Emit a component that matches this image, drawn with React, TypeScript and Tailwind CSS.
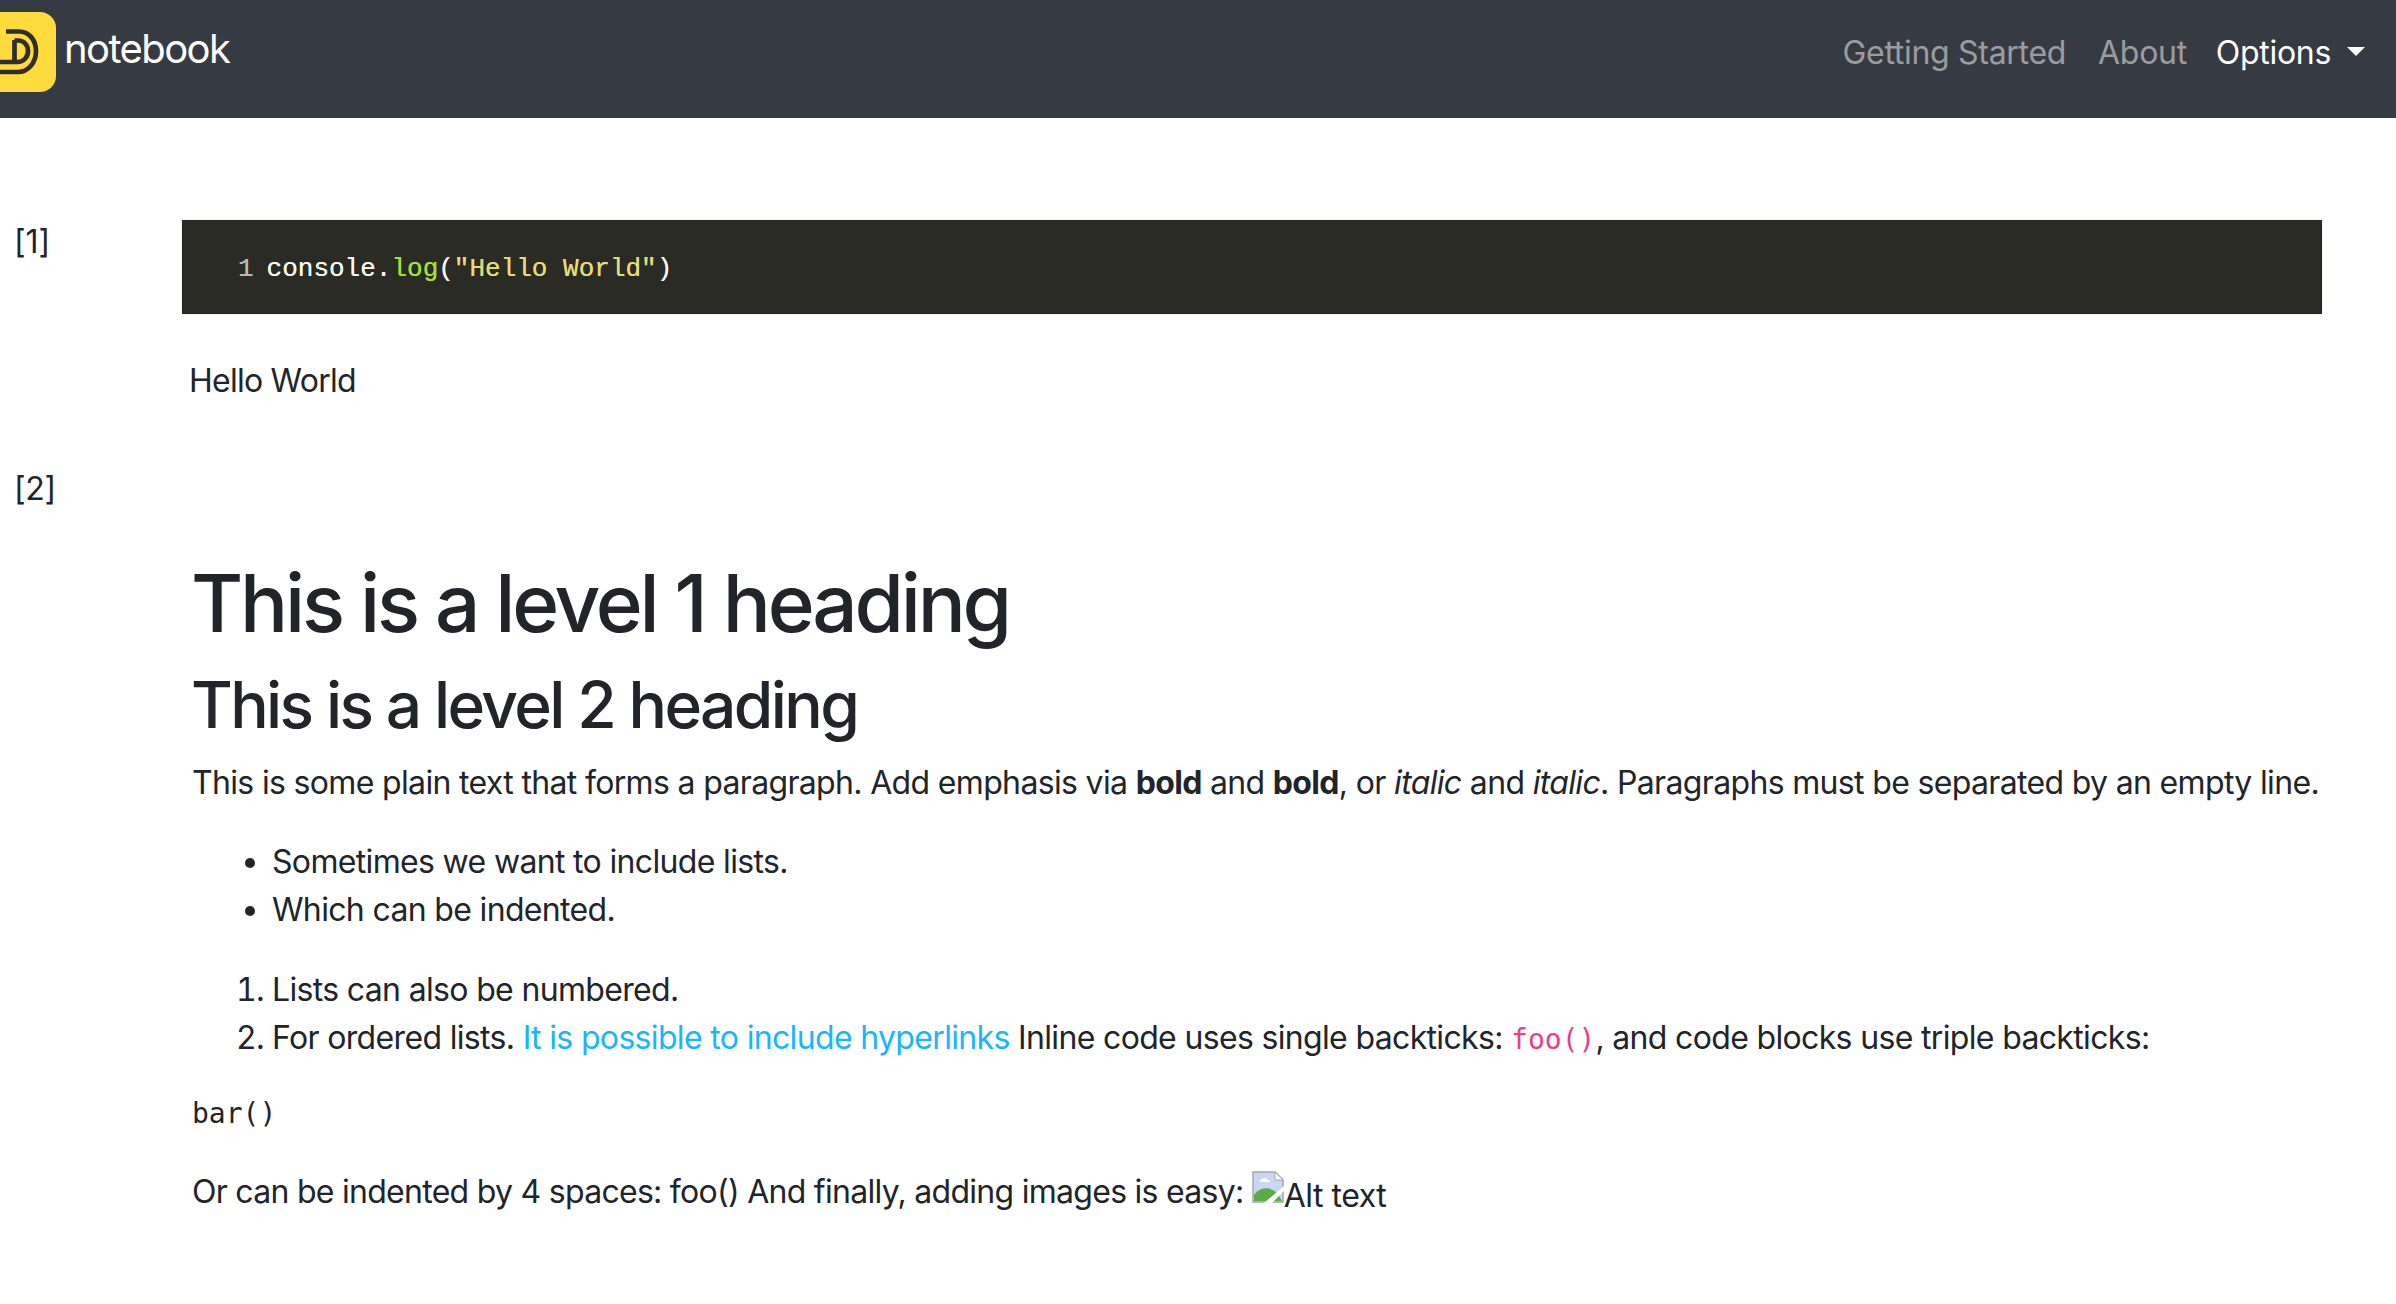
function Logo() {
  return (
    <div className="-ml-6 mb-[14px] h-20 w-20 shrink-0 rounded-2xl bg-[#ffdb3d]">
      <svg viewBox="0 0 80 80" className="h-20 w-20" fill="none" stroke="#2f2e2b" strokeWidth="4.700">
        <path d="M30 19.500H43C53 19.500 60 28 60 39C60 51 52 60 42 60H0" />
        <path d="M38.500 28.500H42C48 28.500 52 33 52 39C52 45 48 50 41 50H0M38.500 28V50" />
      </svg>
    </div>
  )
}

function BrokenImage() {
  return (
    <svg viewBox="0 0 32 32" className="inline-block h-8 w-8 align-baseline">
      <path d="M1 1h22l8 8v22H1z" fill="#c7d7f4" stroke="#a6a6a6" strokeWidth="1.500" />
      <path d="M23 1v8h8z" fill="#fff" stroke="#a6a6a6" strokeWidth="1" />
      <path d="M8 10c0-3 7-4 8-1 2 0 3 2 1 2H9c-1 0-1-1-1-1z" fill="#fff" />
      <path d="M2 30v-6c4-6 14-11 24-1l4 7z" fill="#5aac44" />
      <path d="M12 32 32 15v5L20 32z" fill="#fff" />
    </svg>
  )
}

export default function App() {
  return (
    <div className="min-h-[1304px] overflow-hidden bg-white font-['Inter',sans-serif] text-[32px] leading-[48px] tracking-[-0.66px] text-[#212529]">
      {/* Navbar */}
      <nav className="flex h-[118px] items-center justify-between bg-[#363a42] pr-[31px]">
        <div className="flex items-center gap-2">
          <Logo />
          <span className="pb-5 text-[40px] tracking-[-1.6px] text-white">notebook</span>
        </div>
        <div className="flex items-center gap-8 pb-3 tracking-[-0.3px]">
          <a className="text-white/50">Getting Started</a>
          <a className="text-white/50">About</a>
          <a className="-ml-[3px] flex items-center gap-4 text-white">
            Options
            <span className="mb-1 h-0 w-0 border-x-[9px] border-t-[9px] border-x-transparent border-t-white" />
          </a>
        </div>
      </nav>

      {/* Cell 1 */}
      <section className="mt-[102px] flex">
        <div className="-mt-0.5 w-[182px] shrink-0 pl-[14px] tracking-[-0.1px]">[1]</div>
        <div className="mr-[74px] flex-1">
          <pre className="flex h-[94px] items-center bg-[#2b2b25] pl-14 pt-[3px] font-['Liberation_Mono',monospace] text-[26px] tracking-normal text-[#f8f8f2] ring-1 ring-[#f3f3f3] [text-shadow:0_0_0.5px_currentColor]">
            <span className="mr-[13px] text-[#b9b9b4]">1</span>
            <span>console.</span>
            <span className="text-[#a6e22e]">log</span>
            <span>(</span>
            <span className="text-[#e6db74]">"Hello World"</span>
            <span>)</span>
          </pre>
          <p className="mt-[43px] pl-[7px] tracking-[-0.76px]">Hello World</p>
        </div>
      </section>

      {/* Cell 2 */}
      <section className="mt-[60px] flex">
        <div className="w-[192px] shrink-0 pl-[14px] tracking-[-0.3px]">[2]</div>
        <div className="min-w-0 flex-1 whitespace-nowrap">
          <h1 className="-ml-px mt-[90px] text-[80px] leading-[96px] font-[550] tracking-[-3.2px]">This is a level 1 heading</h1>
          <h2 className="-ml-px mt-[15px] text-[64px] leading-[77px] font-[550] tracking-[-2.6px]">This is a level 2 heading</h2>
          <p className="mt-4">
            This is some plain text that forms a paragraph. Add emphasis via <b>bold</b> and <b>bold</b>, or{' '}
            <i>italic</i> and <i>italic</i>. Paragraphs must be separated by an empty line.
          </p>
          <ul className="mt-[31px] list-disc pl-20">
            <li>Sometimes we want to include lists.</li>
            <li>Which can be indented.</li>
          </ul>
          <ol className="mt-8 list-decimal pl-20">
            <li>Lists can also be numbered.</li>
            <li>
              For ordered lists. <a className="text-[#19b5fe]">It is possible to include hyperlinks</a> Inline code uses
              single backticks:{' '}
              <code className="font-['DejaVu_Sans_Mono',monospace] text-[28px] tracking-normal text-[#e83e8c]">foo()</code>,
              and code blocks use triple backticks:
            </li>
          </ol>
          <pre className="mt-[26px] font-['DejaVu_Sans_Mono',monospace] text-[28px] tracking-normal">bar()</pre>
          <p className="mt-[30px] tracking-[-0.72px]">
            Or can be indented by 4 spaces: foo() And finally, adding images is easy: <BrokenImage />
            <span className="relative top-1 tracking-[-0.5px]">Alt text</span>
          </p>
        </div>
      </section>
    </div>
  )
}
